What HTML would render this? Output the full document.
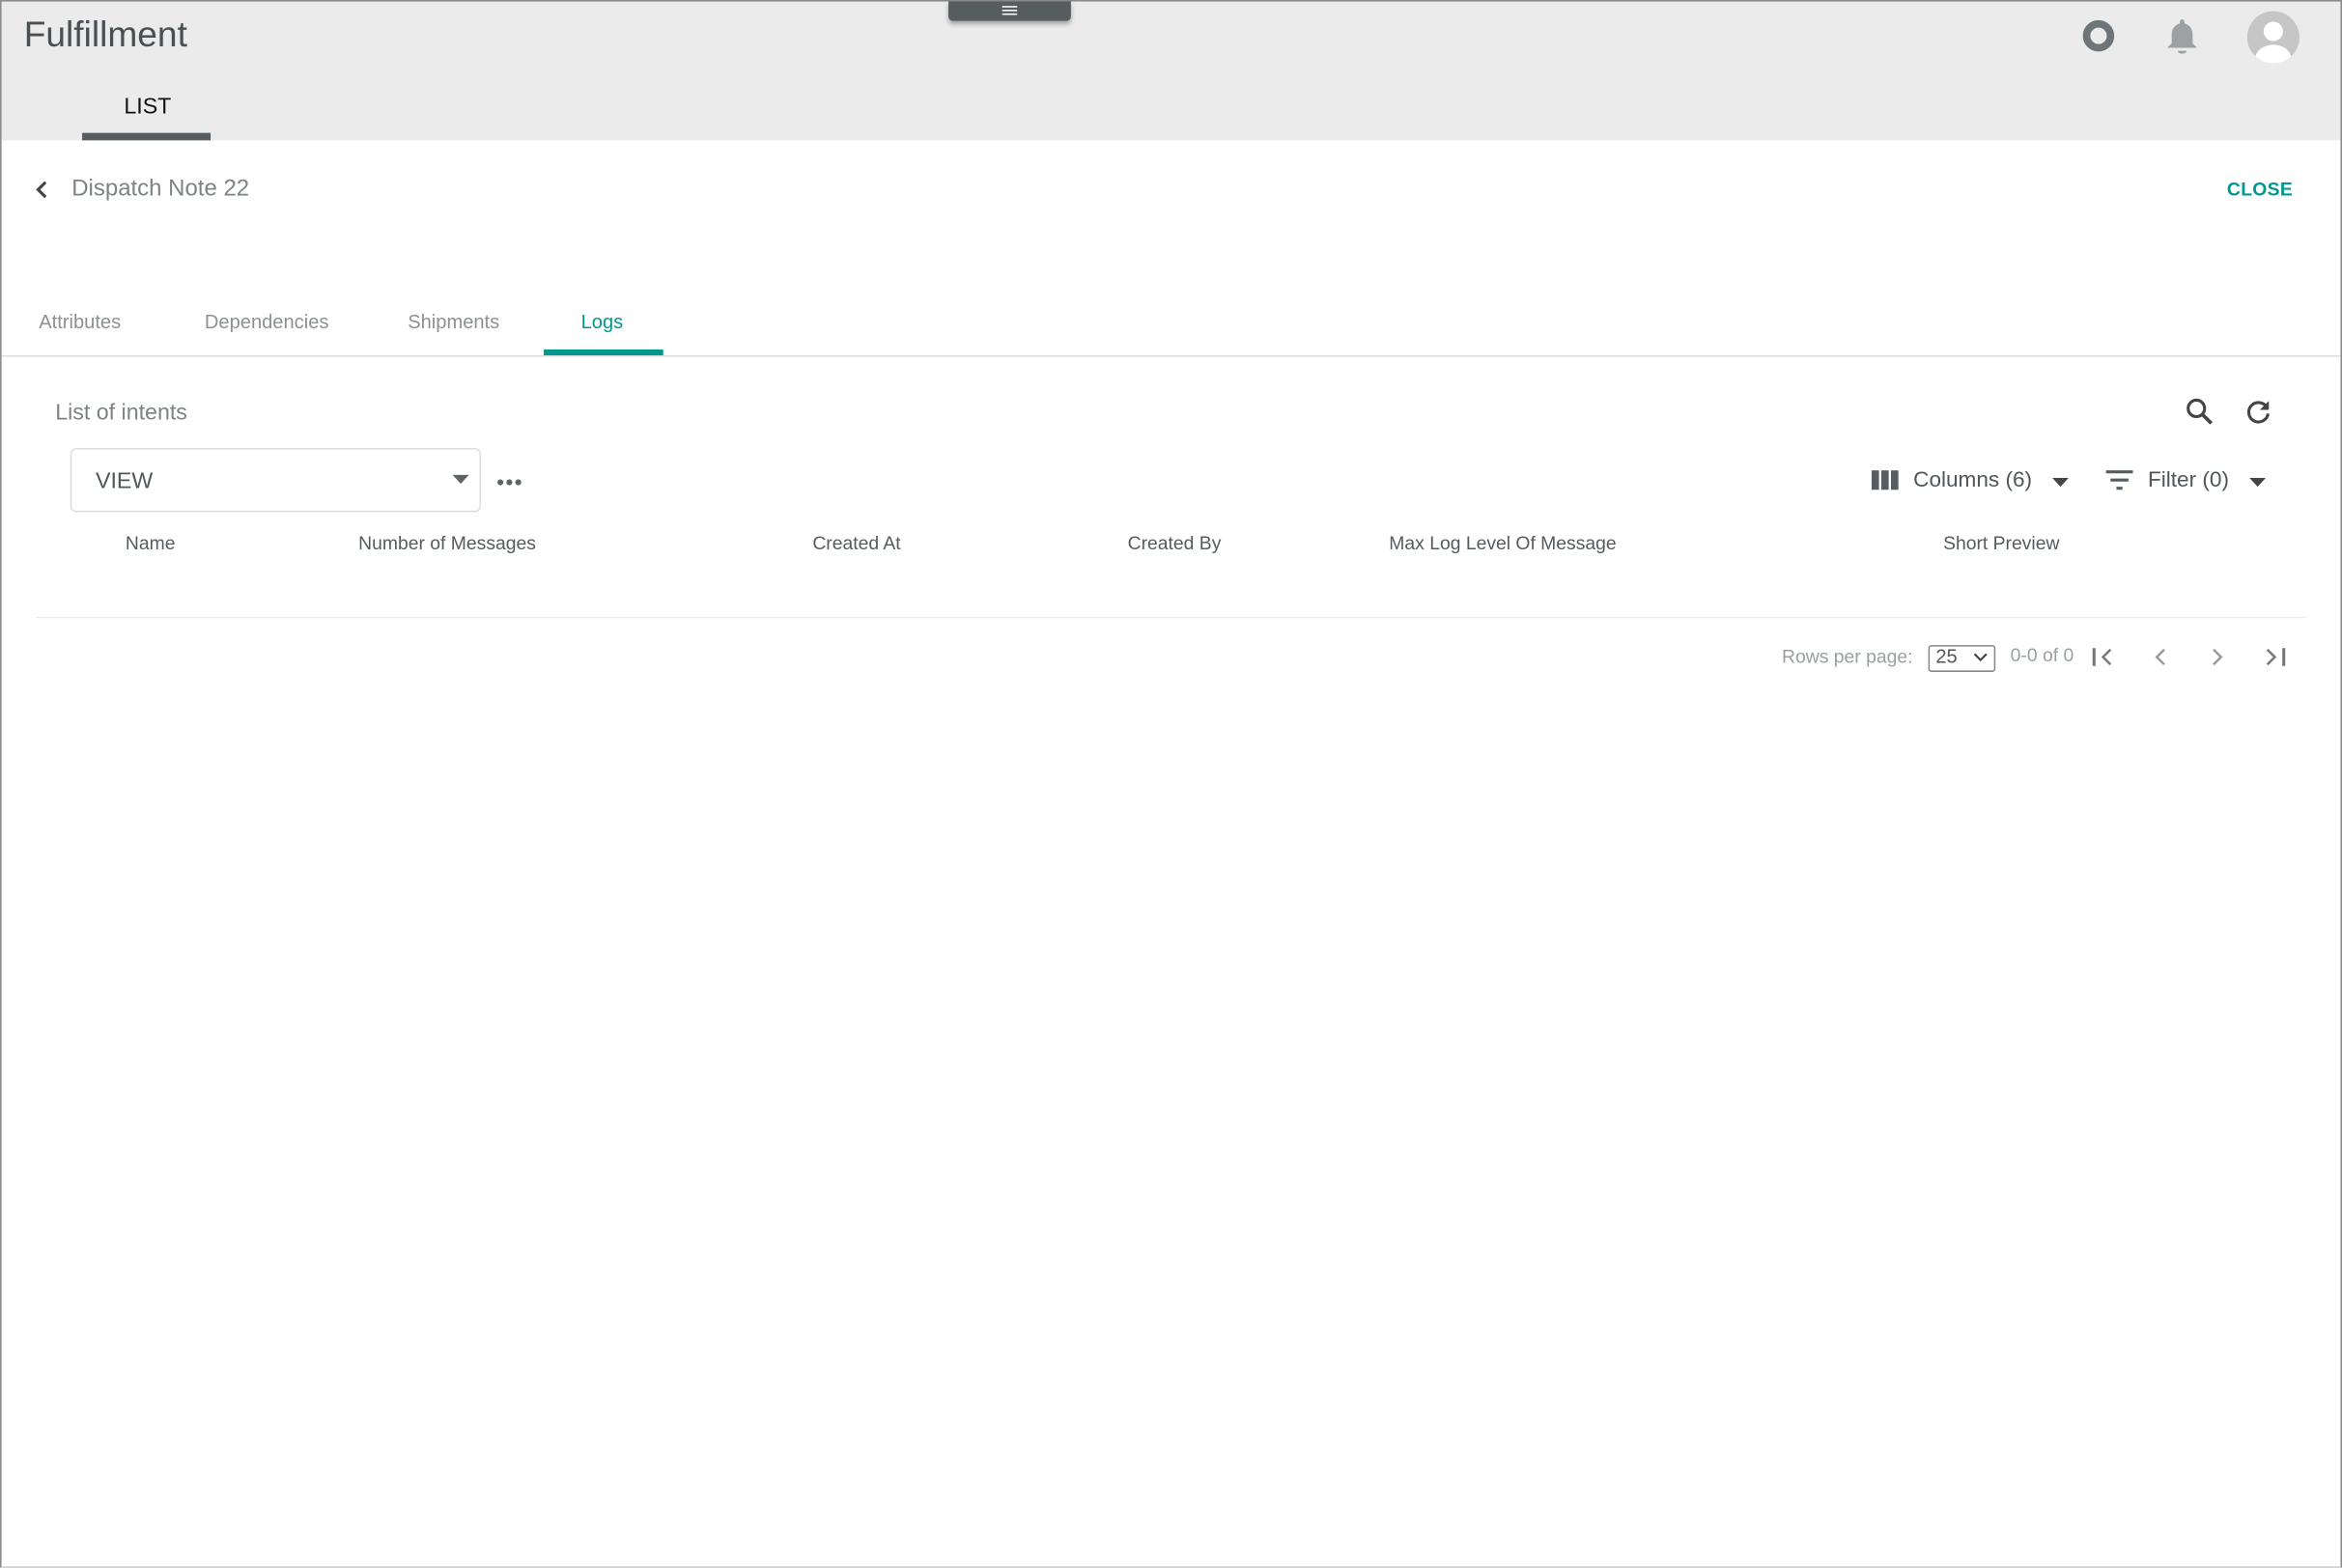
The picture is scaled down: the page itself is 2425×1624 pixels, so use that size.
<!DOCTYPE html>
<html><head><meta charset="utf-8"><style>
html,body{margin:0;padding:0;background:#fff;overflow:hidden;width:2425px;height:1624px}
#w{position:absolute;left:0;top:0;width:1568px;height:1050px;transform:scale(1.54656);transform-origin:0 0;font-family:"Liberation Sans",sans-serif;background:#fff}
.a{position:absolute;white-space:nowrap}
.hdr{position:absolute;left:0;top:0;width:1568px;height:94px;background:#ebebeb}
.th{font-size:12.5px;color:#555b5e;top:357px}
</style></head><body><div id="w">
<div class="hdr"></div>
<div class="a" style="left:0;top:0;width:1566px;height:1048px;border:1px solid #8a8a8a;border-bottom-color:#ccc"></div>
<div class="a" style="left:635px;top:1px;width:82px;height:13px;background:#555d60;border-radius:0 0 3px 3px;box-shadow:0 2px 3px rgba(0,0,0,.3)"></div>
<div class="a" style="left:671px;top:4px;width:10px;height:1.2px;background:#fff;box-shadow:0 2.5px 0 #fff,0 5px 0 #fff"></div>
<div class="a" style="left:16px;top:10px;font-size:24px;color:#4a4f52">Fulfillment</div>
<div class="a" style="left:83px;top:63px;font-size:15px;color:#111">LIST</div>
<div class="a" style="left:55px;top:89px;width:86px;height:5px;background:#555d60"></div>
<svg class="a" style="left:1393px;top:12px" width="24" height="24" viewBox="0 0 24 24"><circle cx="12" cy="12" r="8" fill="none" stroke="#6e7578" stroke-width="5"/></svg>
<svg class="a" style="left:1448px;top:11px" width="26" height="28" viewBox="0 0 26 28"><path d="M13 2a1.5 1.5 0 0 1 1.5 1.5v1.2C18 5.6 20 8.5 20 12v6l3 3H3l3-3v-6c0-3.5 2-6.4 5.5-7.3V3.5A1.5 1.5 0 0 1 13 2z" fill="#9ca1a3"/><path d="M10 23h6a3 2 0 0 1-6 0z" fill="#9ca1a3"/></svg>
<svg class="a" style="left:1504px;top:7px" width="36" height="36" viewBox="0 0 36 36"><defs><clipPath id="c"><circle cx="18" cy="18" r="17.5"/></clipPath></defs><circle cx="18" cy="18" r="17.5" fill="#c6c6c6"/><g clip-path="url(#c)" fill="#fff"><circle cx="18" cy="14" r="6.5"/><ellipse cx="18" cy="32" rx="12" ry="9"/></g></svg>
<svg class="a" style="left:22px;top:120px" width="12" height="14" viewBox="0 0 12 14"><path d="M8.5 2L3.5 7l5 5" fill="none" stroke="#444" stroke-width="2"/></svg>
<div class="a" style="left:48px;top:118px;font-size:15.5px;color:#7d8386">Dispatch Note 22</div>
<div class="a" style="left:1491px;top:120px;font-size:12.5px;font-weight:bold;color:#00998f;letter-spacing:.2px">CLOSE</div>
<div class="a" style="left:26px;top:208px;font-size:13px;color:#8c9193">Attributes</div>
<div class="a" style="left:137px;top:208px;font-size:13px;color:#8c9193">Dependencies</div>
<div class="a" style="left:273px;top:208px;font-size:13px;color:#8c9193">Shipments</div>
<div class="a" style="left:389px;top:208px;font-size:13px;color:#00998f">Logs</div>
<div class="a" style="left:364px;top:234px;width:80px;height:4px;background:#00998f"></div>
<div class="a" style="left:1px;top:238px;width:1566px;height:1px;background:#dcdcdc"></div>
<div class="a" style="left:37px;top:268px;font-size:15px;color:#7d8386">List of intents</div>
<svg class="a" style="left:1462px;top:265px" width="22" height="22" viewBox="0 0 22 22"><circle cx="8.5" cy="8.5" r="5.5" fill="none" stroke="#444" stroke-width="2"/><path d="M12.5 12.5L18.5 18.5" stroke="#444" stroke-width="2.4"/></svg>
<svg class="a" style="left:1501px;top:265px" width="22" height="22" viewBox="0 0 22 22"><path d="M16.5 7.5A6.5 6.5 0 1 0 17.5 12" fill="none" stroke="#444" stroke-width="2"/><path d="M18 3.5v6h-6z" fill="#444"/></svg>
<div class="a" style="left:47px;top:300px;width:273px;height:41px;border:1px solid #dedede;border-radius:4px"></div>
<div class="a" style="left:64px;top:314px;font-size:15px;color:#50575a">VIEW</div>
<svg class="a" style="left:303px;top:318px" width="12" height="7"><path d="M0 0h11L5.5 6z" fill="#5d6568"/></svg>
<svg class="a" style="left:332px;top:319px" width="18" height="8"><circle cx="3" cy="4" r="2" fill="#5d6568"/><circle cx="9" cy="4" r="2" fill="#5d6568"/><circle cx="15" cy="4" r="2" fill="#5d6568"/></svg>
<svg class="a" style="left:1253px;top:314px" width="20" height="16"><rect x="0" y="1" width="5" height="13" fill="#555d60"/><rect x="6.5" y="1" width="5" height="13" fill="#555d60"/><rect x="13" y="1" width="5" height="13" fill="#555d60"/></svg>
<div class="a" style="left:1281px;top:314px;font-size:14.6px;color:#50575a">Columns (6)</div>
<svg class="a" style="left:1374px;top:320px" width="12" height="7"><path d="M0 0h11L5.5 6z" fill="#444"/></svg>
<svg class="a" style="left:1409px;top:314px" width="22" height="16"><path d="M1 2h18M4 7.5h12M8 13h4" stroke="#555d60" stroke-width="2"/></svg>
<div class="a" style="left:1438px;top:314px;font-size:14.6px;color:#50575a">Filter (0)</div>
<svg class="a" style="left:1506px;top:320px" width="12" height="7"><path d="M0 0h11L5.5 6z" fill="#444"/></svg>
<div class="a th" style="left:84px">Name</div>
<div class="a th" style="left:240px">Number of Messages</div>
<div class="a th" style="left:544px">Created At</div>
<div class="a th" style="left:755px">Created By</div>
<div class="a th" style="left:930px">Max Log Level Of Message</div>
<div class="a th" style="left:1301px">Short Preview</div>
<div class="a" style="left:24px;top:413px;width:1520px;height:1px;background:#ececec"></div>
<div class="a" style="left:1193px;top:433px;font-size:12.5px;color:#9a9fa1">Rows per page:</div>
<div class="a" style="left:1291px;top:432px;width:43px;height:16px;border:1px solid #888;border-radius:2px"></div>
<div class="a" style="left:1296px;top:432px;font-size:13px;color:#555">25</div>
<svg class="a" style="left:1321px;top:437px" width="10" height="7"><path d="M1 1l4 4 4-4" fill="none" stroke="#444" stroke-width="1.4"/></svg>
<div class="a" style="left:1346px;top:432px;font-size:12.5px;color:#9a9fa1">0-0 of 0</div>
<svg class="a" style="left:1400px;top:433px" width="16" height="14"><path d="M2 1v12" stroke="#777" stroke-width="2"/><path d="M13 2L8 7l5 5" fill="none" stroke="#777" stroke-width="1.6"/></svg>
<svg class="a" style="left:1440px;top:433px" width="12" height="14"><path d="M9 2L4 7l5 5" fill="none" stroke="#999" stroke-width="1.6"/></svg>
<svg class="a" style="left:1479px;top:433px" width="12" height="14"><path d="M3 2l5 5-5 5" fill="none" stroke="#999" stroke-width="1.6"/></svg>
<svg class="a" style="left:1516px;top:433px" width="16" height="14"><path d="M2 2l5 5-5 5" fill="none" stroke="#777" stroke-width="1.6"/><path d="M13 1v12" stroke="#777" stroke-width="2"/></svg>
</div></body></html>
